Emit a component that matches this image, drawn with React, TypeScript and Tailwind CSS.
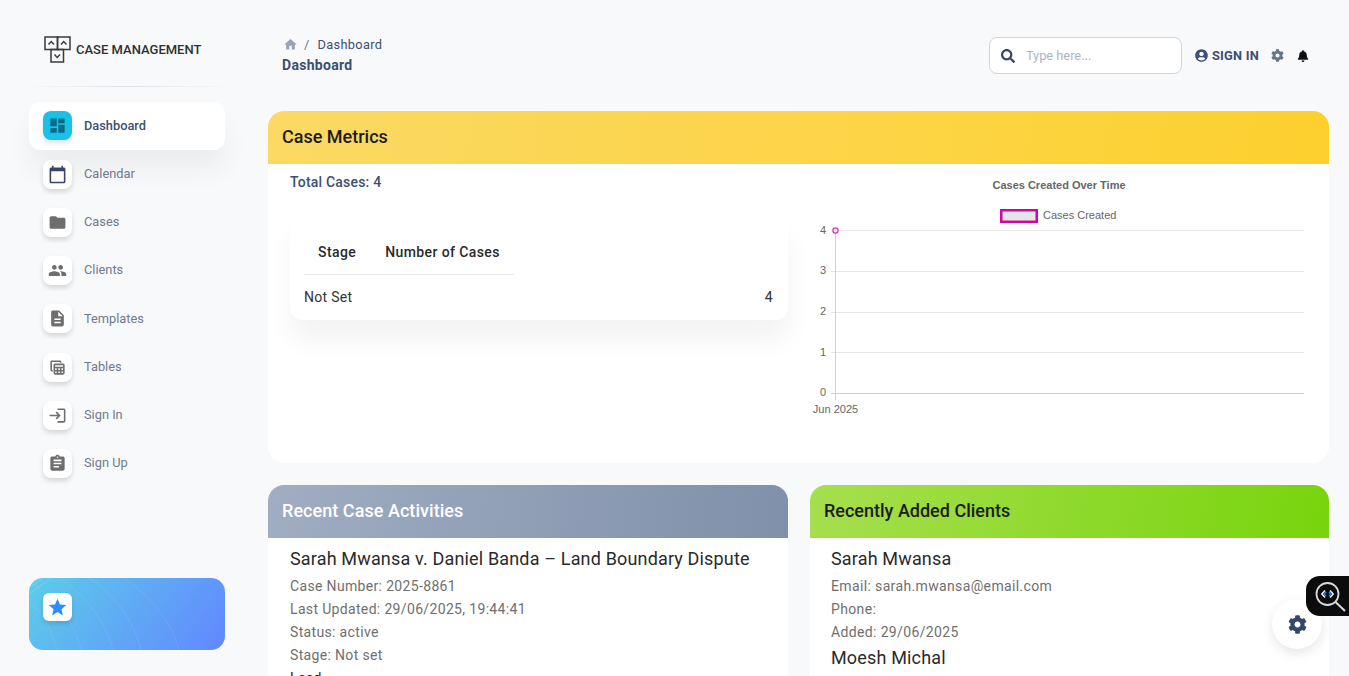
import React from "react";
import { MdDashboard, MdFolder, MdPeople, MdDescription, MdLogin, MdAssignment, MdHome, MdStar, MdCalendarToday, MdTableView } from "react-icons/md";
import { FaSearch, FaUserCircle, FaCog, FaBell } from "react-icons/fa";

const nav = [
  { label: "Dashboard", Icon: MdDashboard, active: true, h: "h-[48px]" },
  { label: "Calendar", Icon: MdCalendarToday, color: "text-[#3a4270]", h: "h-[48px]" },
  { label: "Cases", Icon: MdFolder, h: "h-[48px]" },
  { label: "Clients", Icon: MdPeople, h: "h-[48px]" },
  { label: "Templates", Icon: MdDescription, h: "h-[49px]" },
  { label: "Tables", Icon: MdTableView, h: "h-[48px]" },
  { label: "Sign In", Icon: MdLogin, h: "h-[48px]" },
  { label: "Sign Up", Icon: MdAssignment, h: "h-[48px]" },
];

function Logo() {
  return (
    <svg width="28" height="28" viewBox="0 0 28 28" fill="none" stroke="#3a3a3a" strokeWidth="1.5" className="shrink-0">
      <rect x="1" y="1" width="12.5" height="12.5" />
      <rect x="13.5" y="1" width="12.5" height="12.5" />
      <rect x="7" y="13.5" width="12.5" height="12.5" />
      <path d="M4.5 8.5 7.2 5.6 10 8.5M17 8.5 19.7 5.6 22.5 8.5M10.5 18.5 13.2 21.4 16 18.5" />
    </svg>
  );
}

function Chart() {
  const ys = [230.5, 271.5, 312.5, 352.5, 393.5];
  const labelY = [234, 274, 315, 356, 396];
  return (
    <svg width="520" height="260" viewBox="810 170 520 260" className="block" style={{ fontFamily: "'Liberation Sans', Arial, sans-serif" }}>
      <text x="1059" y="189" textAnchor="middle" fontSize="11" fontWeight="700" fill="#666">Cases Created Over Time</text>
      <rect x="1001.25" y="210.25" width="35.5" height="11.5" fill="#e6e6e6" stroke="#d0069f" strokeWidth="2.5" />
      <text x="1043" y="219" fontSize="11" fill="#666">Cases Created</text>
      {ys.map((y, i) => (
        <g key={y}>
          <line x1="831" x2="1304" y1={y} y2={y} stroke={i === 4 ? "#d0d0d0" : "#e6e6e6"} />
          <text x="826" y={labelY[i]} textAnchor="end" fontSize="11" fill="#666">{4 - i}</text>
        </g>
      ))}
      <line x1="835.5" x2="835.5" y1="230" y2="400" stroke="#d0d0d0" />
      <text x="835.5" y="413" textAnchor="middle" fontSize="11" fill="#666">Jun 2025</text>
      <circle cx="835.5" cy="230.5" r="2.6" fill="#eee" stroke="#d633b5" strokeWidth="1.2" />
    </svg>
  );
}

function Waves() {
  return (
    <svg className="absolute inset-0" width="196" height="72" viewBox="0 0 196 72" fill="none" stroke="#ffffff" strokeOpacity="0.09">
      <path d="M28 72C22 50 14 34 0 24" />
      <path d="M52 72C46 46 30 22 4 6" />
      <path d="M84 72C76 40 54 16 30 0" />
      <path d="M112 72C104 40 84 16 60 0" />
      <path d="M150 72C142 42 120 16 94 0" />
      <path d="M0 16 22 0M0 10 14 0" strokeOpacity="0.16" />
    </svg>
  );
}

function Inspector() {
  return (
    <div className="absolute right-0 top-[576px] w-[43px] h-[40px] bg-[#0c0c0c] rounded-l-[14px] flex items-center pl-[8px] z-20">
      <svg width="32" height="34" viewBox="0 0 32 34" fill="none">
        <circle cx="13.5" cy="15" r="11" stroke="#d9d9d9" strokeWidth="1.8" />
        <path d="M21.5 23 31 32" stroke="#d9d9d9" strokeWidth="2" />
        <path d="M11 11.5 7.8 15l3.2 3.5" stroke="#e8f0ff" strokeWidth="1.5" />
        <path d="M16 11.5 19.2 15 16 18.5" stroke="#e8f0ff" strokeWidth="1.5" />
        <path d="M12 13 10 15l2 2" stroke="#2f80ff" strokeWidth="1.6" />
        <path d="M15 13 17 15l-2 2" stroke="#2f80ff" strokeWidth="1.6" />
      </svg>
    </div>
  );
}

export default function App() {
  return (
    <div className="relative flex h-[676px] overflow-hidden bg-[#f8f9fa] font-['Roboto',sans-serif]">
      <aside className="w-[268px] shrink-0 flex flex-col">
        <div className="flex items-center h-[86px] pl-[44px] pt-[14px] gap-[4px]">
          <Logo />
          <span className="-mt-[2px] text-[13px] font-medium text-[#303030] leading-none">CASE MANAGEMENT</span>
        </div>
        <div className="mx-[20px] w-[215px] h-px bg-gradient-to-r from-transparent via-[#dfe2ea] to-transparent" />
        <nav className="mt-[15px] ml-[29px] w-[196px] flex flex-col">
          {nav.map(({ label, Icon, active, color, h }) => (
            <div key={label} className={`${h} flex items-center pl-[14px] rounded-[12px] ${active ? "bg-white shadow-[0_20px_27px_0_rgba(0,0,0,0.05)]" : ""}`}>
              <div className={`w-[29px] h-[29px] rounded-[8px] flex items-center justify-center ${active ? "-mt-[1px] bg-[#17c1e8] shadow-[0_3px_5px_rgba(0,0,0,0.12)]" : "bg-white shadow-[0_3px_5px_rgba(0,0,0,0.14)]"}`}>
                <Icon className={`${active ? "text-[#0b6a86]" : color ? color : "text-[#6e6e6e]"} text-[19px]`} />
              </div>
              <span className={`ml-[12px] text-[12.8px] ${active ? "font-medium text-[#3d4f72]" : "text-[#70798f]"}`}>{label}</span>
            </div>
          ))}
        </nav>
        <div className="relative mt-auto mb-[26px] ml-[29px] w-[196px] h-[72px] rounded-[14px] overflow-hidden bg-[linear-gradient(125deg,#5ccde9,#6287ff)] pl-[14px] pt-[15px]">
          <Waves />
          <div className="relative w-[29px] h-[28px] rounded-[6px] bg-white flex items-center justify-center shadow-[0_3px_5px_rgba(0,0,0,0.12)]">
            <MdStar className="text-[#2d8cff] text-[21px]" />
          </div>
        </div>
      </aside>

      <main className="flex-1 min-w-0 pr-[20px]">
        <header className="h-[111px] flex items-start justify-between">
          <div className="pl-[14px] pt-[36px]">
            <div className="flex items-center h-[17px] text-[12.8px] text-[#3d4f72] tracking-[0.3px]">
              <MdHome className="text-[#9aa3b5] text-[15px] ml-[1px]" />
              <span className="ml-[6px] text-[#67748e]">/</span>
              <span className="ml-[8px]">Dashboard</span>
            </div>
            <div className="mt-[4px] text-[14px] font-bold text-[#3d4f72] tracking-[0.3px] leading-[16px]">Dashboard</div>
          </div>
          <div className="flex items-center pt-[37px] pr-[20px]">
            <div className="w-[193px] h-[37px] bg-white border border-[#d2d6da] rounded-[8px] flex items-center pl-[11px]">
              <FaSearch className="text-[#344767] text-[14px] shrink-0" />
              <input placeholder="Type here..." className="ml-[11px] w-[140px] bg-transparent outline-none text-[12.8px] placeholder:text-[#adb5c5]" />
            </div>
            <FaUserCircle className="ml-[13px] text-[#3d4f72] text-[13px]" />
            <span className="ml-[4px] text-[12.8px] font-bold text-[#3d4f72] tracking-[0.25px]">SIGN IN</span>
            <FaCog className="ml-[12px] text-[#67748e] text-[13px]" />
            <FaBell className="ml-[13px] text-[#111] text-[12px]" />
          </div>
        </header>

        <section className="h-[352px] bg-white rounded-[16px] overflow-hidden">
          <div className="h-[53px] flex items-center pl-[14px] pb-[2px] bg-[linear-gradient(100deg,#fbd964,#fdd02e)]">
            <h2 className="text-[18px] font-medium text-[#1b1b1b]">Case Metrics</h2>
          </div>
          <div className="flex">
            <div className="w-[520px] shrink-0 pl-[22px]">
              <div className="mt-[10px] h-[16px] leading-[16px] text-[14px] font-medium text-[#3d4f72] tracking-[0.2px]">Total Cases: 4</div>
              <div className="mt-[26px] h-[104px] bg-white rounded-[12px] shadow-[0_20px_27px_0_rgba(0,0,0,0.05)] pl-[14px] pr-[15px]">
                <div className="h-[59px] w-[210px] flex items-end border-b border-[#e9ecef] pb-[14px] pl-[14px] gap-[29px] text-[14px] font-medium text-[#2a2a2a] tracking-[0.4px] leading-[16px]">
                  <span>Stage</span>
                  <span>Number of Cases</span>
                </div>
                <div className="flex justify-between mt-[14px] text-[14px] text-[#333] tracking-[0.3px] leading-[16px]">
                  <span>Not Set</span>
                  <span>4</span>
                </div>
              </div>
            </div>
            <div className="w-[520px] ml-[22px] mt-[6px]">
              <Chart />
            </div>
          </div>
        </section>

        <div className="mt-[22px] grid grid-cols-[520px_519px] gap-[22px]">
          <section className="bg-white rounded-t-[16px] h-[300px] overflow-hidden">
            <div className="h-[53px] flex items-center pl-[14px] pb-[2px] bg-[linear-gradient(100deg,#a0adc2,#8090aa)]">
              <h2 className="text-[18px] font-medium text-white tracking-[0.05px]">Recent Case Activities</h2>
            </div>
            <div className="pl-[22px] pt-[10px]">
              <h3 className="text-[18px] leading-[22px] text-[#2a2a2a] tracking-[0.16px]">Sarah Mwansa v. Daniel Banda – Land Boundary Dispute</h3>
              <div className="mt-[5px] text-[14px] leading-[23px] text-[#6f6f6f] tracking-[0.34px]">
                <p>Case Number: 2025-8861</p>
                <p>Last Updated: 29/06/2025, 19:44:41</p>
                <p>Status: active</p>
                <p>Stage: Not set</p>
                <p className="text-[#2a2a2a]">Lead</p>
              </div>
            </div>
          </section>
          <section className="bg-white rounded-t-[16px] h-[300px] overflow-hidden">
            <div className="h-[53px] flex items-center pl-[14px] pb-[2px] bg-[linear-gradient(100deg,#a6df4e,#78d40c)]">
              <h2 className="text-[18px] font-medium text-[#1b1b1b]">Recently Added Clients</h2>
            </div>
            <div className="pl-[21px] pt-[10px]">
              <h3 className="text-[18px] leading-[22px] text-[#2a2a2a] tracking-[0.16px]">Sarah Mwansa</h3>
              <div className="mt-[5px] text-[14px] leading-[23px] text-[#6f6f6f] tracking-[0.36px]">
                <p>Email: sarah.mwansa@email.com</p>
                <p>Phone:</p>
                <p>Added: 29/06/2025</p>
              </div>
              <h3 className="mt-[3px] text-[18px] leading-[22px] text-[#2a2a2a] tracking-[0.16px]">Moesh Michal</h3>
            </div>
          </section>
        </div>
      </main>

      <button className="absolute left-[1272px] top-[599px] w-[50px] h-[50px] rounded-full bg-white flex items-center justify-center shadow-[0_4px_12px_rgba(0,0,0,0.1)] z-10">
        <FaCog className="text-[#344767] text-[19px]" />
      </button>
      <Inspector />
    </div>
  );
}
